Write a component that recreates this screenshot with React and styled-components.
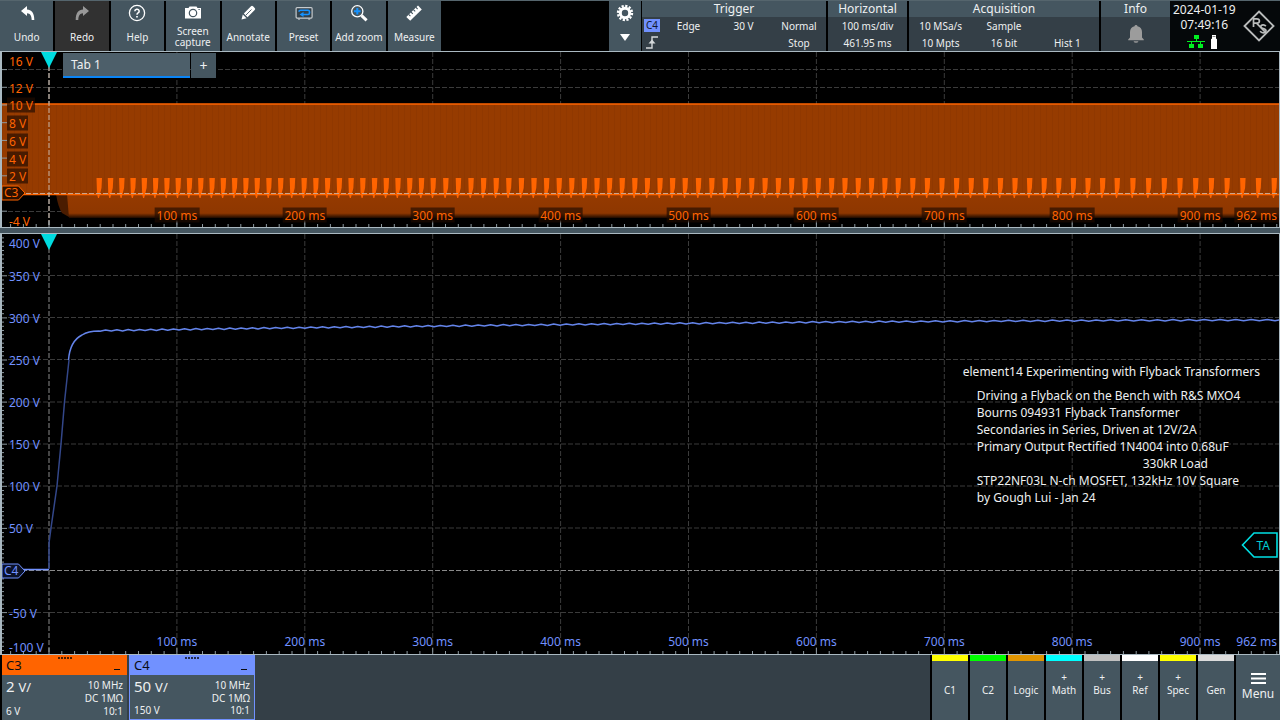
import React from 'react';
import styled, { createGlobalStyle } from 'styled-components';

const GlobalStyle = createGlobalStyle`
  * { box-sizing: border-box; }
  body {
    margin: 0;
    background: #000;
    color: #eef0f1;
    font-family: "Noto Sans", sans-serif;
    font-size: 10px;
    line-height: 12px;
  }
  button { font: inherit; color: inherit; border: 0; padding: 0; margin: 0; cursor: pointer; }
  p, h2 { margin: 0; font-weight: normal; }
`;

const PANEL = '#455660';
const PANEL_DARK = '#343f47';
const FRAME = '#aab9c1';
const ORANGE = '#ff6400';
const BLUE = '#7191ff';

const Shell = styled.div`
  display: flex;
  flex-direction: column;
  min-height: 100vh;
`;

/* ---------- top bar ---------- */

const TopBar = styled.header`
  display: flex;
  height: 52px;
  flex: none;
  border-top: 1px solid #55656d;
  border-bottom: 1px solid ${FRAME};
`;

const Tools = styled.nav`
  display: flex;
  gap: 2px;
  width: 441px;
`;

const ToolButton = styled.button`
  display: flex;
  flex-direction: column;
  align-items: center;
  flex: 1 1 0;
  min-width: 0;
  padding-top: 2px;
  background: ${p => (p.disabled ? '#313131' : PANEL)};
  color: #eef0f1;

  svg { display: block; width: 20px; height: 20px; flex: none; opacity: ${p => (p.disabled ? 0.5 : 1)}; }
`;

const ToolLabel = styled.span`
  display: flex;
  flex-direction: column;
  align-items: center;
  justify-content: center;
  height: 28px;
  line-height: 11px;
  white-space: nowrap;
`;

const Spacer = styled.div`
  flex: 1;
`;

const SetupButton = styled.button`
  display: flex;
  flex-direction: column;
  align-items: center;
  gap: 12px;
  width: 32px;
  padding-top: 3px;
  background: ${PANEL};
  svg { display: block; }
`;

const StatusGroup = styled.div`
  display: flex;
  gap: 2px;
  padding-left: 1px;
`;

const StatusPanel = styled.section`
  display: flex;
  flex-direction: column;
  width: ${p => p.$width}px;
  background: ${PANEL_DARK};
`;

const StatusTitle = styled.h2`
  height: 16px;
  background: ${PANEL};
  font-size: 12px;
  line-height: 15px;
  text-align: center;
`;

const StatusGrid = styled.div`
  display: grid;
  grid-template-columns: ${p => p.$columns};
  grid-auto-rows: 17px;
  justify-items: center;
  align-items: center;
  white-space: nowrap;
  flex: 1;
`;

const SourceBadge = styled.span`
  display: block;
  width: 16px;
  height: 13px;
  background: ${BLUE};
  color: #10182c;
  text-align: center;
`;

const BellWrap = styled.div`
  display: grid;
  place-items: center;
  flex: 1;
`;

const Clock = styled.div`
  display: flex;
  align-items: center;
  justify-content: space-between;
  width: 110px;
  padding: 0 5px 0 3px;
  background: #05080a;
`;

const ClockText = styled.div`
  display: flex;
  flex-direction: column;
  align-items: center;
  font-size: 12px;
  line-height: 15px;
  padding-bottom: 2px;
  white-space: nowrap;
`;

const Ports = styled.div`
  display: flex;
  align-items: center;
  gap: 6px;
  padding-right: 4px;
  margin-top: 3px;
`;

/* ---------- diagrams ---------- */

const Diagram = styled.section`
  position: relative;
  flex: ${p => (p.$grow ? '1 0 420px' : '0 0 176px')};
  border-left: 2px solid ${FRAME};
  border-right: 1px solid ${FRAME};
  border-bottom: 1px solid ${FRAME};
  overflow: hidden;
`;

const Plot = styled.svg`
  position: absolute;
  inset: 0;
  width: 100%;
  height: 100%;
  * { vector-effect: non-scaling-stroke; }
`;

const AxisLabel = styled.span`
  position: absolute;
  padding: 0 2px;
  color: ${p => p.$color};
  background: ${p => (p.$shaded ? 'rgba(30, 10, 0, 0.65)' : 'transparent')};
  font-size: 12px;
  line-height: 15px;
  white-space: nowrap;
`;

const VoltLabel = styled(AxisLabel)`
  left: 5px;
  transform: translateY(-50%);
`;

const TimeLabel = styled(AxisLabel)`
  transform: translate(${p => (p.$last ? '-100%' : '-50%')}, -50%);
`;

const Marker = styled.div`
  position: absolute;
  left: 0;
  width: 24px;
  height: 16px;
  transform: translateY(-50%);
  color: ${p => p.$color};
  font-size: 12px;
  line-height: 16px;
  svg { position: absolute; inset: 0; }
  span { position: relative; padding-left: 2px; }
`;

const TriggerLevel = styled.div`
  position: absolute;
  right: 1px;
  width: 37px;
  height: 26px;
  transform: translateY(-50%);
  color: #00ced2;
  font-size: 12px;
  line-height: 27px;
  text-align: right;
  svg { position: absolute; inset: 0; }
  span { position: relative; padding-right: 8px; }
`;

const TabStrip = styled.div`
  position: absolute;
  top: 1px;
  left: 61px;
  display: flex;
  gap: 1px;
`;

const Tab = styled.button`
  width: 127px;
  height: 25px;
  padding-left: 8px;
  background: #4d5f6a;
  border-bottom: 2px solid #0a84f5;
  font-size: 12px;
  text-align: left;
`;

const AddTab = styled.button`
  width: 25px;
  height: 25px;
  background: ${PANEL};
  font-size: 14px;
`;

const Splitter = styled.div`
  flex: none;
  height: 6px;
  background: ${PANEL};
  border-bottom: 1px solid ${FRAME};
`;

const Notes = styled.div`
  position: absolute;
  left: 75%;
  top: 30%;
  padding: 3px 0 0 3px;
  font-size: 12px;
  line-height: 17px;
  white-space: nowrap;
`;

const NoteTitle = styled.p`
  padding-bottom: 7px;
`;

const NoteLine = styled.p`
  padding-left: ${p => (p.$deep ? 180 : 14)}px;
`;

/* ---------- bottom bar ---------- */

const BottomBar = styled.footer`
  display: flex;
  flex: none;
  height: 65px;
  background: ${PANEL_DARK};
`;

const ChannelCard = styled.button`
  display: flex;
  flex-direction: column;
  width: 127px;
  background: ${PANEL};
  border: solid ${p => (p.$active ? p.$color : '#000')};
  border-width: ${p => (p.$active ? '0 1px 1px' : '0 0 0 2px')};
  text-align: left;
  & + & { margin-left: 2px; width: 126px; }
`;

const ChannelHead = styled.span`
  position: relative;
  display: flex;
  justify-content: space-between;
  align-self: stretch;
  height: 20px;
  padding: 0 7px 0 4px;
  background: ${p => p.$color};
  color: #0b0d14;
  font-size: 13px;
  line-height: 21px;
`;

const Grip = styled.span`
  position: absolute;
  top: 2px;
  left: 50%;
  width: 14px;
  height: 2px;
  margin-left: -7px;
  background: repeating-linear-gradient(90deg, rgba(0, 0, 0, 0.7) 0 2px, transparent 2px 3px);
`;

const Minimise = styled.span`
  align-self: flex-end;
  width: 6px;
  height: 1px;
  margin-bottom: 5px;
  background: #0b0d14;
`;

const ChannelBody = styled.span`
  display: flex;
  justify-content: space-between;
  align-self: stretch;
  flex: 1;
  padding: 2px 4px 3px;
`;

const Column = styled.span`
  display: flex;
  flex-direction: column;
  justify-content: space-between;
  padding-top: ${p => (p.$right ? 2 : 0)}px;
  text-align: ${p => (p.$right ? 'right' : 'left')};
`;

const Scale = styled.span`
  font-size: 15px;
  line-height: 18px;
  small { font-size: 13px; }
`;

const SourceRow = styled.div`
  display: flex;
  gap: 2px;
  padding-left: 2px;
  background: #000;
`;

const SourceButton = styled.button`
  display: flex;
  flex-direction: column;
  align-items: center;
  width: 36px;
  padding-top: 10px;
  background: ${PANEL};
  border-top: 6px solid ${p => p.$color};
`;

const Plus = styled.span`
  height: 13px;
`;

const MenuButton = styled.button`
  display: flex;
  flex-direction: column;
  align-items: center;
  gap: 4px;
  width: 44px;
  padding-top: 18px;
  background: ${PANEL};
  font-size: 12px;
`;

/* ---------- icons ---------- */

const UndoIcon = () => (
  <svg viewBox="0 0 20 20">
    <path d="M4 8 10 3v3.600c4.400.2 7.300 3.100 7.300 10.400h-2.600c-.2-4.600-1.500-6.500-4.700-6.800V13z" fill="#fff" />
  </svg>
);
const RedoIcon = () => (
  <svg viewBox="0 0 20 20">
    <path d="M17 8 11 3v3.600C6.600 6.800 3.700 9.700 3.700 17h2.600c.2-4.600 1.500-6.500 4.700-6.800V13z" fill="#fff" />
  </svg>
);
const HelpIcon = () => (
  <svg viewBox="0 0 20 20" fill="none" stroke="#fff">
    <circle cx="10" cy="10" r="7.600" strokeWidth="1.300" />
    <path d="M7.800 8.200a2.200 2 0 1 1 3.300 1.700c-.8.5-1.100.9-1.100 1.900" strokeWidth="1.500" />
    <path d="M10 13v1.600" strokeWidth="1.700" />
  </svg>
);
const CameraIcon = () => (
  <svg viewBox="0 0 20 20">
    <path d="M2 5h3.500l1-1.500h7l1 1.500H18v10.500H2z" fill="#fff" />
    <circle cx="10" cy="10" r="3.700" fill="none" stroke="#455660" strokeWidth="1.200" />
    <path d="M15.500 6.500h1.200" stroke="#455660" strokeWidth="1" />
  </svg>
);
const PencilIcon = () => (
  <svg viewBox="0 0 20 20">
    <path d="m3.500 16.500 1.300-5 3.700 3.700zM5.800 10.400 13 3.200q1-.9 2 0l1.700 1.700q.9 1 0 2L9.500 14.200z" fill="#fff" />
    <path d="m8 12 5.500-5.500" stroke="#455660" strokeWidth=".9" />
  </svg>
);
const PresetIcon = () => (
  <svg viewBox="0 0 20 20">
    <rect x="2.100" y="4.600" width="16" height="10.500" rx="1" fill="#33414a" stroke="#c6cbce" strokeWidth="1.200" />
    <path d="M5 8.700q0-1.500 1.500-1.500h7.500q1.500 0 1.500 1.500v1.300q0 1.500-1.500 1.500H8.500" fill="none" stroke="#1492ff" strokeWidth="1.600" />
    <path d="m5.500 11.500 4-2.600v5.200z" fill="#1492ff" />
    <path d="M4 16.100h2M14.200 16.100h2" stroke="#c6cbce" />
  </svg>
);
const ZoomIcon = () => (
  <svg viewBox="0 0 20 20" fill="none">
    <circle cx="8.300" cy="8.300" r="5.600" stroke="#fff" strokeWidth="1.300" />
    <path d="M8.300 5v6.600M5 8.300h6.600" stroke="#1492ff" strokeWidth="2" />
    <path d="m12.600 12.600 5 4.800" stroke="#fff" strokeWidth="3" />
  </svg>
);
const RulerIcon = () => (
  <svg viewBox="0 0 20 20">
    <path d="M2.300 14 14 2.600l3.800 3.800L6.200 17.800z" fill="#fff" />
    <path d="m4.600 11.400 1.800 1.800M7 9l1.800 1.800M9.400 6.600l1.800 1.800M11.800 4.200 13.600 6" stroke="#455660" strokeWidth="1.100" />
  </svg>
);
const GearIcon = () => (
  <svg width="18" height="18" viewBox="0 0 18 18" fill="none" stroke="#fff">
    <circle cx="9" cy="9" r="7" strokeWidth="2.400" strokeDasharray="2.200 1.465" />
    <circle cx="9" cy="9" r="4.700" strokeWidth="3" />
  </svg>
);
const ArrowDown = () => (
  <svg width="10" height="7" viewBox="0 0 10 7"><path d="M0 0h10L5 7z" fill="#fff" /></svg>
);
const EdgeIcon = () => (
  <svg width="14" height="13" viewBox="0 0 14 13" fill="none" stroke="#d5d9db" strokeWidth="1.400">
    <path d="M1 12h6V1h6" />
    <path d="m3.500 7.500 3.500-4 3.500 4z" fill="#d5d9db" stroke="none" />
  </svg>
);
const BellIcon = () => (
  <svg width="18" height="20" viewBox="0 0 18 20">
    <path d="M9 1a1.500 1.500 0 0 1 1.500 1.300C13.500 3 15 5.200 15 8v5.500l1.800 2v.8H1.200v-.8l1.800-2V8c0-2.800 1.500-5 4.500-5.700A1.500 1.500 0 0 1 9 1zM6.500 17.200h5q-.5 1.600-2.500 1.600t-2.500-1.600z" fill="#9c9c9c" />
  </svg>
);
const LanIcon = () => (
  <svg width="18" height="13" viewBox="0 0 18 13">
    <path d="M7 0h5v4H7zM2 9h5v4H2zM11 9h5v4h-5z" fill="#00f020" />
    <path d="M0 6.500h18M9.500 4v2.500M4.500 6.500V9M13.500 6.500V9" stroke="#00f020" fill="none" />
  </svg>
);
const UsbIcon = () => (
  <svg width="6" height="14" viewBox="0 0 6 14"><path d="M1 0h4v3.500l1 .8V14H0V4.300l1-.8z" fill="#fff" /><path d="M1.500 1.500h3" stroke="#888" /></svg>
);
const Logo = () => (
  <svg width="32" height="32" viewBox="0 0 32 32" fill="none" stroke="#b9bbbb" role="img" aria-label="R&S">
    <path d="M16 1.500 30.500 16 16 30.500 1.500 16z" strokeWidth="1.900" />
    <path d="M10.500 17V8.800h3.300q2.600 0 2.600 2.200t-2.600 2.200h-3.300M13.500 13.200l9.500 9.600" strokeWidth="1.700" />
    <path d="M22.800 16.200q-.8-1.300-2.600-1.300-2.400 0-2.400 1.900c0 2.400 5.200 1.300 5.200 3.900q0 2.100-2.700 2.100-2.200 0-3.100-1.700" strokeWidth="1.700" />
  </svg>
);
const MenuIcon = () => (
  <svg width="15" height="11" viewBox="0 0 15 11"><path d="M0 1h15M0 5.500h15M0 10h15" stroke="#fff" strokeWidth="2" /></svg>
);

/* ---------- data ---------- */

const tools = [
  { label: ['Undo'], Icon: UndoIcon },
  { label: ['Redo'], Icon: RedoIcon, disabled: true },
  { label: ['Help'], Icon: HelpIcon },
  { label: ['Screen', 'capture'], Icon: CameraIcon },
  { label: ['Annotate'], Icon: PencilIcon },
  { label: ['Preset'], Icon: PresetIcon },
  { label: ['Add zoom'], Icon: ZoomIcon },
  { label: ['Measure'], Icon: RulerIcon },
];

const W = 1277;
const ORIGIN = 47;
const DIV = 127.9;
const timeX = n => ORIGIN + n * DIV;
const divisions = [0, 1, 2, 3, 4, 5, 6, 7, 8, 9];

const OV_H = 175;
const overviewLabels = [
  ['16 V', 9], ['12 V', 36], ['10 V', 53], ['8 V', 71], ['6 V', 89], ['4 V', 107], ['2 V', 124], ['-4 V', 169],
];
const MAIN_H = 420;
const mainLabels = [
  ['400 V', 9], ['350 V', 42], ['300 V', 84], ['250 V', 126], ['200 V', 168], ['150 V', 210],
  ['100 V', 252], ['50 V', 294], ['-50 V', 379], ['-100 V', 413],
];

/* Burst spacing widens with time: [position, bursts since the previous one]. */
const burstAnchors = [[97, 0], [255, 14], [431, 15], [683, 20], [896, 16], [1115, 15], [1272, 10]];
const bursts = [burstAnchors[0][0]];
for (let i = 1; i < burstAnchors.length; i++) {
  const [end, count] = burstAnchors[i];
  const start = burstAnchors[i - 1][0];
  for (let k = 1; k <= count; k++) bursts.push(start + ((end - start) * k) / count);
}

/* Output voltage after start-up, with the same ripple as the bursts. */
const settled = x => 86 + 10.5 * Math.pow(Math.max(0, 1 - (x - 97) / 1183), 1.7);
const ripple = bursts
  .map((x, i) => {
    const next = bursts[i + 1] || x + 15;
    return `L${(x + 1).toFixed(1)} ${(settled(x) + 0.7).toFixed(1)} L${((x + next) / 2 + 1).toFixed(1)} ${(settled(x) - 0.6).toFixed(1)}`;
  })
  .join(' ');

function TimeTicks({ height }) {
  const marks = [];
  for (let i = -3; i <= 96; i++) {
    const x = ORIGIN + (i * DIV) / 10;
    marks.push(`M${x.toFixed(1)} ${height}v${i % 10 === 0 ? -6 : -3}`);
  }
  return <path d={marks.join('')} stroke="#8e9aa1" />;
}

function VoltTicks({ zero, step, minor, height }) {
  const marks = [];
  for (let i = -20; i <= 110; i++) {
    const y = zero - (i * step) / minor;
    if (y > 0 && y < height) marks.push(`M0 ${y.toFixed(1)}h${i % minor === 0 ? 5 : 2}`);
  }
  return <path d={marks.join('')} stroke="#8e9aa1" />;
}

function Grid({ rows, height, zero }) {
  return (
    <g strokeDasharray="5 2" stroke="#3b3b3b">
      {rows.map(y => <path key={y} d={`M6 ${y}H${W}`} />)}
      {divisions.slice(1).map(n => <path key={n} d={`M${timeX(n)} 0V${height}`} />)}
      <path d={`M6 ${zero}H${W}`} stroke="#8a8a8a" />
      <path d={`M${ORIGIN} 0V${height}`} stroke="#8a8a8a" />
    </g>
  );
}

const percent = (v, total) => `${(v / total) * 100}%`;

function AxisLabels({ volts, height, timeY, color, shaded }) {
  return (
    <>
      {volts.map(([text, y]) => (
        <VoltLabel key={text} $color={color} $shaded={shaded && y > 50 && y < 150} style={{ top: percent(y, height) }}>
          {text}
        </VoltLabel>
      ))}
      {divisions.slice(1).map(n => (
        <TimeLabel key={n} $color={color} $shaded={shaded} style={{ left: percent(timeX(n), W), top: percent(timeY, height) }}>
          {n * 100} ms
        </TimeLabel>
      ))}
      <TimeLabel $last $color={color} $shaded={shaded} style={{ left: '100%', top: percent(timeY, height) }}>
        962 ms
      </TimeLabel>
    </>
  );
}

function ChannelMarker({ color, name, fill, top }) {
  return (
    <Marker $color={color} style={{ top }}>
      <svg width="24" height="16" viewBox="0 0 24 16">
        <path d="M0 1h16.500l6.500 7-6.500 7H0z" fill={fill} stroke={color} />
      </svg>
      <span>{name}</span>
    </Marker>
  );
}

function Overview() {
  return (
    <Diagram aria-label="Channel 3">
      <Plot viewBox={`0 0 ${W} ${OV_H}`} preserveAspectRatio="none">
        <defs>
          <linearGradient id="lower" x1="0" y1="0" x2="0" y2="1">
            <stop offset="0" stopColor="#953a00" />
            <stop offset="0.8" stopColor="#8e3700" />
            <stop offset="1" stopColor="#1c0a00" />
          </linearGradient>
          <pattern id="comb" width="6" height="10" patternUnits="userSpaceOnUse">
            <rect width="6" height="10" fill="#963b00" />
            <rect width="1" height="10" fill="#903800" />
          </pattern>
        </defs>
        <Grid rows={[17.5, 35.5, 159.5]} height={OV_H} zero={141.5} />
        <path d={`M0 52H${W}V142H0z`} fill="url(#comb)" />
        <path d="M54 142H67V165L60 161Q56 155 54 142z" fill="#4a1c00" />
        <path d={`M65 142H${W}V166H67z`} fill="url(#lower)" />
        <path d={`M0 52H${W}`} stroke={ORANGE} strokeWidth="1.500" />
        <path d={`M0 142.500H${W}`} stroke={ORANGE} strokeWidth="1.500" />
        <path
          d={bursts.map(x => `M${x - 2.500} 126h5.500l-.5 10-1.500 6-1 4h-1l-1-4z`).join('')}
          fill={ORANGE}
        />
        <path d={`M24 141.500H${W}`} stroke="#c9a48c" strokeDasharray="5 2" />
        <path d={`M${ORIGIN} 0V${OV_H}`} stroke="#c9b8aa" strokeDasharray="5 2" />
        <path d={`M${ORIGIN - 8} 0h16l-8 16z`} fill="#00dce0" />
        <VoltTicks zero={141.5} step={17.7} minor={1} height={OV_H} />
        <TimeTicks height={OV_H} />
      </Plot>
      <AxisLabels volts={overviewLabels} height={OV_H} timeY={163} color={ORANGE} shaded />
      <ChannelMarker color={ORANGE} name="C3" fill="#2a1000" top={percent(141.5, OV_H)} />
      <TabStrip role="tablist">
        <Tab role="tab" aria-selected="true">Tab 1</Tab>
        <AddTab aria-label="Add tab">+</AddTab>
      </TabStrip>
    </Diagram>
  );
}

function MainDiagram() {
  return (
    <Diagram $grow aria-label="Channel 4">
      <Plot viewBox={`0 0 ${W} ${MAIN_H}`} preserveAspectRatio="none">
        <Grid rows={[41.5, 83.5, 125.5, 168, 210, 252, 294, 378.5]} height={MAIN_H} zero={336.5} />
        <path d="M0 335.500H47" stroke={BLUE} strokeWidth="1.500" fill="none" />
        <path d="M47 335V309L49 294L55 252L59 210L62.500 168L67 126" stroke="#33478a" strokeWidth="1.500" fill="none" />
        <path d={`M66.500 126Q68 107 80 101Q86 97 97 97 ${ripple}`} stroke="#6484ea" strokeWidth="1.500" strokeLinejoin="round" fill="none" />
        <path d={`M${ORIGIN - 8} 0h16l-8 16z`} fill="#00dce0" />
        <VoltTicks zero={336.5} step={42.1} minor={10} height={MAIN_H} />
        <TimeTicks height={MAIN_H} />
      </Plot>
      <AxisLabels volts={mainLabels} height={MAIN_H} timeY={407} color={BLUE} />
      <ChannelMarker color={BLUE} name="C4" fill="#0b1228" top={percent(336.5, MAIN_H)} />
      <Notes>
        <NoteTitle>element14 Experimenting with Flyback Transformers</NoteTitle>
        <NoteLine>Driving a Flyback on the Bench with R&amp;S MXO4</NoteLine>
        <NoteLine>Bourns 094931 Flyback Transformer</NoteLine>
        <NoteLine>Secondaries in Series, Driven at 12V/2A</NoteLine>
        <NoteLine>Primary Output Rectified 1N4004 into 0.68uF</NoteLine>
        <NoteLine $deep>330kR Load</NoteLine>
        <NoteLine>STP22NF03L N-ch MOSFET, 132kHz 10V Square</NoteLine>
        <NoteLine>by Gough Lui - Jan 24</NoteLine>
      </Notes>
      <TriggerLevel style={{ top: percent(311, MAIN_H) }}>
        <svg width="37" height="26" viewBox="0 0 37 26">
          <path d="M1.500 13 13 1h23v24H13z" fill="none" stroke="#00e0e4" strokeWidth="1.600" />
        </svg>
        <span>TA</span>
      </TriggerLevel>
    </Diagram>
  );
}

const channels = [
  { name: 'C3', color: ORANGE, scale: '2', offset: '6 V' },
  { name: 'C4', color: BLUE, scale: '50', offset: '150 V', active: true },
];

const sources = [
  ['C1', '#ffff00'], ['C2', '#00ff00'], ['Logic', '#e09400'], ['Math', '#00ffff', true],
  ['Bus', '#c0c0c0', true], ['Ref', '#ffffff', true], ['Spec', '#ffff00', true], ['Gen', '#dcdcdc'],
];

export default function App() {
  return (
    <Shell>
      <GlobalStyle />
      <TopBar>
        <Tools>
          {tools.map(({ label, Icon, disabled }) => (
            <ToolButton key={label[0]} disabled={disabled}>
              <Icon />
              <ToolLabel>{label.map(line => <span key={line}>{line}</span>)}</ToolLabel>
            </ToolButton>
          ))}
        </Tools>
        <Spacer />
        <SetupButton aria-label="Settings">
          <GearIcon />
          <ArrowDown />
        </SetupButton>
        <StatusGroup>
          <StatusPanel $width={184}>
            <StatusTitle>Trigger</StatusTitle>
            <StatusGrid $columns="20px 53px 57px 54px">
              <SourceBadge>C4</SourceBadge><span>Edge</span><span>30 V</span><span>Normal</span>
              <EdgeIcon /><span /><span /><span>Stop</span>
            </StatusGrid>
          </StatusPanel>
          <StatusPanel $width={79}>
            <StatusTitle>Horizontal</StatusTitle>
            <StatusGrid $columns="1fr">
              <span>100 ms/div</span>
              <span>461.95 ms</span>
            </StatusGrid>
          </StatusPanel>
          <StatusPanel $width={190}>
            <StatusTitle>Acquisition</StatusTitle>
            <StatusGrid $columns="repeat(3, 1fr)">
              <span>10 MSa/s</span><span>Sample</span><span />
              <span>10 Mpts</span><span>16 bit</span><span>Hist 1</span>
            </StatusGrid>
          </StatusPanel>
          <StatusPanel $width={69}>
            <StatusTitle>Info</StatusTitle>
            <BellWrap><BellIcon /></BellWrap>
          </StatusPanel>
        </StatusGroup>
        <Clock>
          <ClockText>
            <span>2024-01-19</span>
            <span>07:49:16</span>
            <Ports><LanIcon /><UsbIcon /></Ports>
          </ClockText>
          <Logo />
        </Clock>
      </TopBar>
      <Overview />
      <Splitter />
      <MainDiagram />
      <BottomBar>
        {channels.map(c => (
          <ChannelCard key={c.name} $color={c.color} $active={c.active}>
            <ChannelHead $color={c.color}>
              {c.name}
              <Grip />
              <Minimise />
            </ChannelHead>
            <ChannelBody>
              <Column>
                <Scale>{c.scale} <small>V/</small></Scale>
                <span>{c.offset}</span>
              </Column>
              <Column $right>
                <span>10 MHz</span>
                <span>DC 1MΩ</span>
                <span>10:1</span>
              </Column>
            </ChannelBody>
          </ChannelCard>
        ))}
        <Spacer />
        <SourceRow>
          {sources.map(([name, color, addable]) => (
            <SourceButton key={name} $color={color}>
              <Plus>{addable ? '+' : ''}</Plus>
              <span>{name}</span>
            </SourceButton>
          ))}
          <MenuButton>
            <MenuIcon />
            Menu
          </MenuButton>
        </SourceRow>
      </BottomBar>
    </Shell>
  );
}
